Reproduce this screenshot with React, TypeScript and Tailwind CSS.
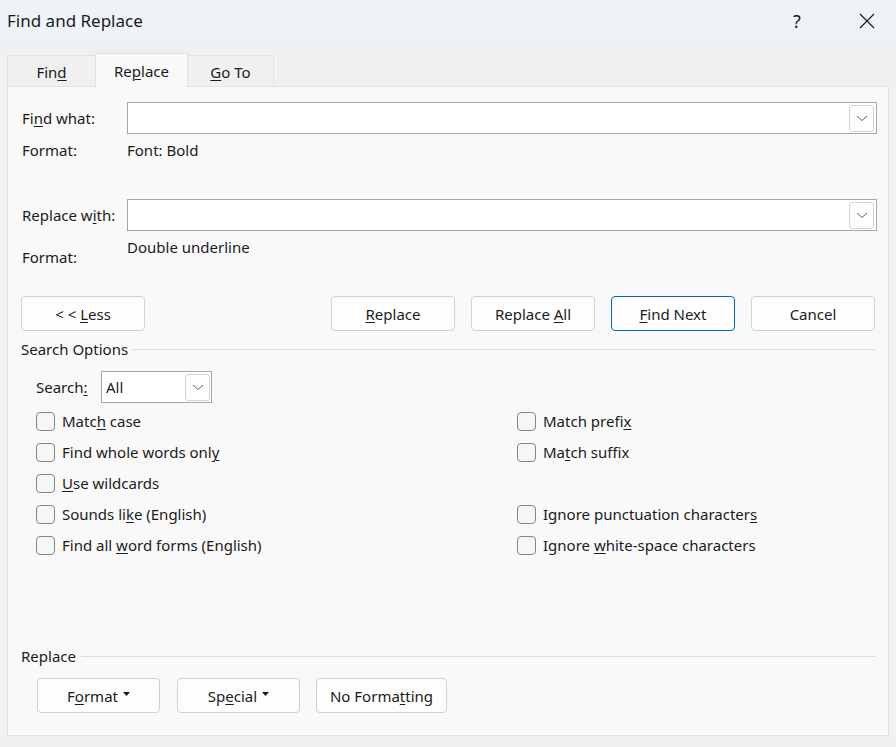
import { ReactNode } from 'react';

// access key: underline one letter of a label
function AK({ t, k }: { t: string; k: number }) {
  return (
    <span className="whitespace-pre">
      {t.slice(0, k)}
      <span className="underline underline-offset-2 decoration-1">{t[k]}</span>
      {t.slice(k + 1)}
    </span>
  );
}

function Chevron() {
  return (
    <svg width="12" height="7" viewBox="0 0 12 7" fill="none">
      <path d="M1 1l5 4.5L11 1" stroke="#606060" strokeWidth="1" />
    </svg>
  );
}

function DropButton() {
  return (
    <div className="w-[25px] h-[27px] border border-[#d4d4d4] rounded-[3px] bg-white flex items-center justify-center">
      <Chevron />
    </div>
  );
}

function Btn({ children, w = 'w-[124px]', primary = false }: { children: ReactNode; w?: string; primary?: boolean }) {
  return (
    <div
      className={`${w} h-[35px] rounded-[4px] border bg-[#fdfdfd] flex items-center justify-center ${
        primary ? 'border-[#0067c0]' : 'border-[#d0d0d0]'
      }`}
    >
      {children}
    </div>
  );
}

function Caret() {
  return (
    <svg width="7" height="4" viewBox="0 0 7 4" className="ml-[5px] mb-[3px]">
      <path d="M0 0h7L3.5 4z" fill="#1b1b1b" />
    </svg>
  );
}

function Check({ label }: { label?: ReactNode }) {
  if (!label) return <div className="h-[31px]" />;
  return (
    <div className="h-[31px] flex items-center">
      <div className="w-[19px] h-[19px] rounded-[4px] border border-[#858585] bg-[#f6f6f6]" />
      <span className="ml-[7px] -mt-[1px]">{label}</span>
    </div>
  );
}

function Section({ title }: { title: string }) {
  return (
    <div className="flex items-center h-[20px]">
      <span>{title}</span>
      <div className="flex-1 h-px bg-[#dcdcdc] ml-[5px] mr-[1px]" />
    </div>
  );
}

export default function App() {
  return (
    <div className="w-[896px] h-[747px] bg-[#f0f0f0] flex flex-col text-[15px] leading-[20px] text-[#1b1b1b] font-['Noto_Sans','Segoe_UI',sans-serif] overflow-hidden">
      {/* title bar */}
      <div className="h-[42px] shrink-0 bg-[#eef3f8] flex items-center pl-[7px] pr-[21px]">
        <span className="flex-1 text-[17px] -mt-[1px]">Find and Replace</span>
        <span className="w-[20px] text-center text-[18px]">?</span>
        <svg width="16" height="16" viewBox="0 0 16 16" className="ml-[52px]">
          <path d="M1 1l14 14M15 1L1 15" stroke="#1b1b1b" strokeWidth="1.2" />
        </svg>
      </div>

      {/* tabs */}
      <div className="mt-[11px] h-[33px] shrink-0 pl-[7px] flex items-end">
        <div className="w-[89px] h-[31px] border border-b-0 border-[#e2e2e2] bg-[#f0f0f0] flex items-center justify-center pt-[1px]">
          <AK t="Find" k={3} />
        </div>
        <div className="relative z-10 -ml-px -mb-px w-[93px] h-[34px] border border-b-0 border-[#e2e2e2] bg-[#f9f9f9] flex items-center justify-center pt-[1px]">
          <AK t="Replace" k={2} />
        </div>
        <div className="-ml-px w-[87px] h-[31px] border border-b-0 border-[#e2e2e2] bg-[#f0f0f0] flex items-center justify-center pt-[1px]">
          <AK t="Go To" k={0} />
        </div>
      </div>

      {/* panel */}
      <div className="ml-[7px] w-[882px] h-[650px] shrink-0 border border-[#e2e2e2] bg-[#f9f9f9] flex flex-col pl-[14px] pr-[11px]">
        <div className="mt-[15px] flex items-center">
          <span className="w-[105px]">
            <AK t="Find what:" k={2} />
          </span>
          <div className="flex-1 h-[32px] border border-[#a6a6a6] bg-white flex items-center justify-end pr-[2px]">
            <DropButton />
          </div>
        </div>
        <div className="mt-[6px] h-[20px] flex items-center">
          <span className="w-[105px]">Format:</span>
          <span>Font: Bold</span>
        </div>

        <div className="mt-[39px] flex items-center">
          <span className="w-[105px]">
            <AK t="Replace with:" k={9} />
          </span>
          <div className="flex-1 h-[32px] border border-[#a6a6a6] bg-white flex items-center justify-end pr-[2px]">
            <DropButton />
          </div>
        </div>
        <div className="mt-[6px] h-[30px] flex items-start">
          <span className="w-[105px] mt-[10px]">Format:</span>
          <span>Double underline</span>
        </div>

        <div className="mt-[29px] flex items-center pr-[2px] -ml-px">
          <Btn w="w-[124px]">
            <span className="whitespace-pre">
              {'< < '}
              <span className="underline underline-offset-2 decoration-1">L</span>
              ess
            </span>
          </Btn>
          <div className="flex-1" />
          <div className="flex gap-[16px]">
            <Btn>
              <AK t="Replace" k={0} />
            </Btn>
            <Btn>
              <AK t="Replace All" k={8} />
            </Btn>
            <Btn primary>
              <AK t="Find Next" k={0} />
            </Btn>
            <Btn>Cancel</Btn>
          </div>
        </div>

        <div className="mt-[8px] -ml-px">
          <Section title="Search Options" />
        </div>

        <div className="mt-[12px] pl-[14px] flex items-center">
          <span className="w-[65px]">
            <AK t="Search:" k={6} />
          </span>
          <div className="w-[111px] h-[32px] border border-[#a6a6a6] bg-white flex items-center pl-[4px] pr-[1px]">
            <span className="flex-1">All</span>
            <DropButton />
          </div>
        </div>

        <div className="mt-[3px] pl-[14px] grid grid-cols-[481px_1fr]">
          <Check label={<AK t="Match case" k={4} />} />
          <Check label={<AK t="Match prefix" k={11} />} />
          <Check label={<AK t="Find whole words only" k={20} />} />
          <Check label={<AK t="Match suffix" k={2} />} />
          <Check label={<AK t="Use wildcards" k={0} />} />
          <Check />
          <Check label={<AK t="Sounds like (English)" k={9} />} />
          <Check label={<AK t="Ignore punctuation characters" k={28} />} />
          <Check label={<AK t="Find all word forms (English)" k={9} />} />
          <Check label={<AK t="Ignore white-space characters" k={7} />} />
        </div>

        <div className="mt-auto -ml-px">
          <Section title="Replace" />
        </div>
        <div className="mt-[12px] mb-[22px] pl-[15px] flex gap-[17px]">
          <Btn w="w-[123px]">
            <AK t="Format" k={1} />
            <Caret />
          </Btn>
          <Btn w="w-[123px]">
            <AK t="Special" k={2} />
            <Caret />
          </Btn>
          <div className="-ml-px">
            <Btn w="w-[131px]">
              <AK t="No Formatting" k={8} />
            </Btn>
          </div>
        </div>
      </div>
    </div>
  );
}
